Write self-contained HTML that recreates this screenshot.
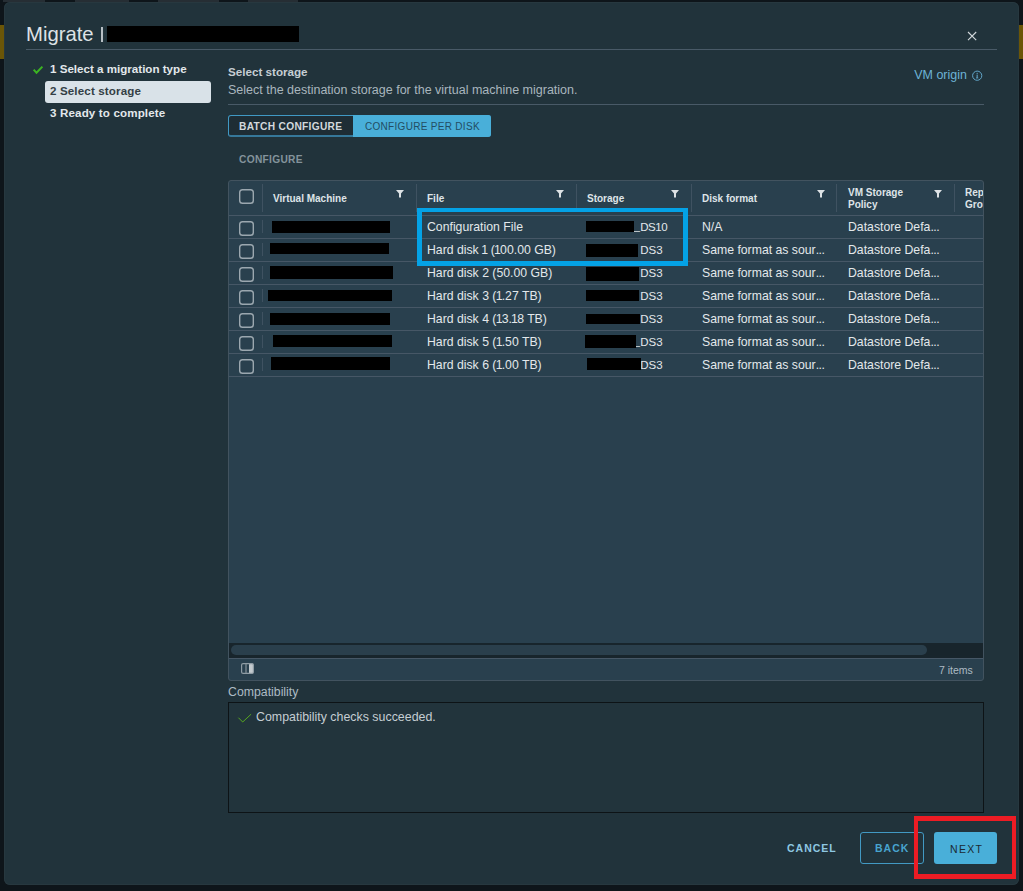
<!DOCTYPE html>
<html><head><meta charset="utf-8">
<style>
*{box-sizing:border-box;margin:0;padding:0}
html,body{width:1023px;height:891px;overflow:hidden;background:#0e151a;font-family:"Liberation Sans",sans-serif}
.abs{position:absolute}
.t{position:absolute;white-space:nowrap;line-height:1}
#modal{position:absolute;left:4px;top:2px;width:1015px;height:883px;background:#21333b;border-radius:6px;box-shadow:inset 0 0 0 1px #27383f}
.hl{position:absolute;height:1px;background:#495a67}
.blk{position:absolute;background:#000}
.cb{position:absolute;width:15px;height:15px;border-radius:3.5px;box-shadow:inset 0 0 0 1.4px #9ba7af}
.cell{position:absolute;font-size:12.25px;color:#e3e8eb;white-space:nowrap;line-height:1}
.rowl{position:absolute;left:229px;width:754px;height:1px;background:#465766}
.vsep{position:absolute;width:1px;background:#3f5261}
.hdr{position:absolute;font-size:10px;font-weight:bold;color:#dfe4e8;white-space:nowrap;line-height:12px}
.flt{position:absolute;width:8px;height:8px}
</style></head><body>
<!-- background stuff -->
<div class="abs" style="left:0;top:25px;width:5px;height:34px;background:#6b5607"></div>
<div class="abs" style="left:1019px;top:25px;width:4px;height:34px;background:#6b5607"></div>

<div class="abs" style="left:3px;top:0;width:42px;height:2px;background:#262e34"></div>
<div class="abs" style="left:75px;top:0;width:54px;height:2px;background:#262e34"></div>
<div class="abs" style="left:158px;top:0;width:61px;height:2px;background:#262e34"></div>
<div class="abs" style="left:248px;top:0;width:50px;height:2px;background:#262e34"></div>
<div id="modal"></div>

<!-- title -->
<div class="t" style="left:26px;top:24.3px;font-size:20.3px;color:#dde2e6">Migrate</div>
<div class="abs" style="left:101px;top:26.5px;width:2px;height:15px;background:#b8c0c5"></div>
<div class="blk" style="left:107px;top:26px;width:192px;height:16px"></div>
<div class="hl" style="left:26px;top:49px;width:971px"></div>
<!-- close -->
<svg class="abs" style="left:966px;top:30px" width="12" height="12" viewBox="0 0 12 12"><path d="M2 2L10.2 10.2M10.2 2L2 10.2" stroke="#d3d9dc" stroke-width="1.1"/></svg>

<!-- left nav -->
<svg class="abs" style="left:32px;top:64px" width="12" height="11" viewBox="0 0 12 11"><path d="M1.7 5.6L4.5 8.8L10.4 2.6" stroke="#3cb422" stroke-width="2" fill="none"/></svg>
<div class="t" style="left:50px;top:63.4px;font-size:11.6px;font-weight:bold;color:#e3e8eb">1 Select a migration type</div>
<div class="abs" style="left:45px;top:81px;width:166px;height:22px;background:#d9e2e8;border-radius:3px"></div>
<div class="t" style="left:50px;top:84.6px;font-size:11.6px;font-weight:bold;color:#343f46;letter-spacing:0.13px">2 Select storage</div>
<div class="t" style="left:50px;top:107px;font-size:11.6px;font-weight:bold;color:#e3e8eb;letter-spacing:0.14px">3 Ready to complete</div>

<!-- content header -->
<div class="t" style="left:228px;top:65.5px;font-size:11.65px;font-weight:bold;color:#c6ced3">Select storage</div>
<div class="t" style="left:228px;top:84px;font-size:12.5px;color:#a9b6be">Select the destination storage for the virtual machine migration.</div>
<div class="t" style="left:914.3px;top:68.5px;font-size:12.45px;color:#6db4d6">VM origin</div>
<svg class="abs" style="left:971px;top:70px" width="12" height="12" viewBox="0 0 12 12"><circle cx="6.2" cy="5.7" r="4.6" stroke="#62a6c9" stroke-width="1" fill="none"/><rect x="5.6" y="4.6" width="1.1" height="3.4" fill="#62a6c9"/><circle cx="6.15" cy="3.3" r="0.65" fill="#62a6c9"/><rect x="5" y="7.6" width="2.3" height="0.8" fill="#62a6c9"/></svg>
<div class="hl" style="left:228px;top:104px;width:756px"></div>

<!-- button group -->
<div class="abs" style="left:228px;top:115px;width:263px;height:22px;border:1px solid #4099c4;border-bottom:2px solid #36789a;border-radius:3px;background:#1e2d35"></div>
<div class="abs" style="left:353px;top:115px;width:138px;height:22px;background:#49afd9;border-radius:0 3px 3px 0"></div>
<div class="t" style="left:239px;top:122px;font-size:10.2px;font-weight:bold;color:#d3d9dd;letter-spacing:0.3px">BATCH CONFIGURE</div>
<div class="t" style="left:365px;top:122px;font-size:10px;color:#234d63;letter-spacing:0.3px">CONFIGURE PER DISK</div>
<div class="t" style="left:239px;top:155px;font-size:10.2px;font-weight:bold;color:#84939c;letter-spacing:0.3px">CONFIGURE</div>

<!-- datagrid -->
<div class="abs" style="left:228px;top:180px;width:756px;height:501px;background:#29404e;border:1px solid #42535f;border-radius:3px"></div>
<div class="hl" style="left:229px;top:215px;width:754px;background:#465766"></div>
<div id="rows"></div><div class="cb" style="left:239px;top:189px"></div>
<div class="vsep" style="left:262px;top:184px;height:28px"></div>
<div class="vsep" style="left:416px;top:184px;height:28px"></div>
<div class="vsep" style="left:576px;top:184px;height:28px"></div>
<div class="vsep" style="left:691px;top:184px;height:28px"></div>
<div class="vsep" style="left:836px;top:184px;height:28px"></div>
<div class="vsep" style="left:954px;top:184px;height:28px"></div>
<div class="hdr" style="left:273px;top:193px">Virtual Machine</div>
<div class="hdr" style="left:427px;top:193px">File</div>
<div class="hdr" style="left:587px;top:193px">Storage</div>
<div class="hdr" style="left:702px;top:193px">Disk format</div>
<div class="hdr" style="left:848px;top:187px">VM Storage<br>Policy</div>
<div class="hdr" style="left:965px;top:187px;width:18px;overflow:hidden">Replication<br>Group</div>
<svg class="flt" style="left:395.5px;top:190px" viewBox="0 0 8 8"><path d="M0 0H8L5 3.5V7.5H3V3.5Z" fill="#dde2e5"/></svg>
<svg class="flt" style="left:555.5px;top:190px" viewBox="0 0 8 8"><path d="M0 0H8L5 3.5V7.5H3V3.5Z" fill="#dde2e5"/></svg>
<svg class="flt" style="left:670.5px;top:190px" viewBox="0 0 8 8"><path d="M0 0H8L5 3.5V7.5H3V3.5Z" fill="#dde2e5"/></svg>
<svg class="flt" style="left:816.5px;top:190px" viewBox="0 0 8 8"><path d="M0 0H8L5 3.5V7.5H3V3.5Z" fill="#dde2e5"/></svg>
<svg class="flt" style="left:933.5px;top:190px" viewBox="0 0 8 8"><path d="M0 0H8L5 3.5V7.5H3V3.5Z" fill="#dde2e5"/></svg>
<div class="rowl" style="top:238px"></div>
<div class="cb" style="left:239px;top:220.6px"></div>
<div class="vsep" style="left:262px;top:220px;height:13px"></div>
<div class="blk" style="left:272px;top:221px;width:118px;height:12px"></div>
<div class="cell" style="left:427px;top:221.3px">Configuration File</div>
<div class="cell" style="left:633.6px;top:221.3px;font-size:11.5px">_</div>
<div class="cell" style="left:640.3px;top:221.8px;font-size:11.5px;letter-spacing:-0.5px">DS10</div>
<div class="blk" style="left:585.6px;top:221px;width:48.39999999999998px;height:11px"></div>
<div class="cell" style="left:702px;top:221.3px">N/A</div>
<div class="cell" style="left:848px;top:221.3px">Datastore Defa<span style="letter-spacing:-0.5px">...</span></div>
<div class="rowl" style="top:261px"></div>
<div class="cb" style="left:239px;top:243.6px"></div>
<div class="vsep" style="left:262px;top:243px;height:13px"></div>
<div class="blk" style="left:270px;top:242.5px;width:119px;height:11.5px"></div>
<div class="cell" style="left:427px;top:244.3px">Hard disk <span style="margin:0 -0.8px">1</span> (<span style="margin:0 -0.8px">1</span>00.00 GB)</div>
<div class="cell" style="left:640.3px;top:244.8px;font-size:11.5px">DS3</div>
<div class="blk" style="left:586.4px;top:244px;width:52.0px;height:12.800000000000011px"></div>
<div class="cell" style="left:702px;top:244.3px">Same format as sour<span style="letter-spacing:-0.5px">...</span></div>
<div class="cell" style="left:848px;top:244.3px">Datastore Defa<span style="letter-spacing:-0.5px">...</span></div>
<div class="rowl" style="top:284px"></div>
<div class="cb" style="left:239px;top:266.6px"></div>
<div class="vsep" style="left:262px;top:266px;height:13px"></div>
<div class="blk" style="left:270.4px;top:266px;width:123.10000000000002px;height:13px"></div>
<div class="cell" style="left:427px;top:267.3px">Hard disk 2 (50.00 GB)</div>
<div class="cell" style="left:640.3px;top:267.8px;font-size:11.5px">DS3</div>
<div class="blk" style="left:586.2px;top:266.7px;width:52.89999999999998px;height:13.900000000000034px"></div>
<div class="cell" style="left:702px;top:267.3px">Same format as sour<span style="letter-spacing:-0.5px">...</span></div>
<div class="cell" style="left:848px;top:267.3px">Datastore Defa<span style="letter-spacing:-0.5px">...</span></div>
<div class="rowl" style="top:307px"></div>
<div class="cb" style="left:239px;top:289.6px"></div>
<div class="vsep" style="left:262px;top:289px;height:13px"></div>
<div class="blk" style="left:267.6px;top:289.8px;width:124.19999999999999px;height:11.199999999999989px"></div>
<div class="cell" style="left:427px;top:290.3px">Hard disk 3 (<span style="margin:0 -0.8px">1</span>.27 TB)</div>
<div class="cell" style="left:640.3px;top:290.8px;font-size:11.5px">DS3</div>
<div class="blk" style="left:586.2px;top:289.7px;width:52.89999999999998px;height:11.300000000000011px"></div>
<div class="cell" style="left:702px;top:290.3px">Same format as sour<span style="letter-spacing:-0.5px">...</span></div>
<div class="cell" style="left:848px;top:290.3px">Datastore Defa<span style="letter-spacing:-0.5px">...</span></div>
<div class="rowl" style="top:330px"></div>
<div class="cb" style="left:239px;top:312.6px"></div>
<div class="vsep" style="left:262px;top:312px;height:13px"></div>
<div class="blk" style="left:270.4px;top:312.7px;width:119.40000000000003px;height:12.100000000000023px"></div>
<div class="cell" style="left:427px;top:313.3px">Hard disk 4 (<span style="margin:0 -0.8px">1</span>3.<span style="margin:0 -0.8px">1</span>8 TB)</div>
<div class="cell" style="left:640.3px;top:313.8px;font-size:11.5px">DS3</div>
<div class="blk" style="left:586.2px;top:314.2px;width:54.09999999999991px;height:9.699999999999989px"></div>
<div class="cell" style="left:702px;top:313.3px">Same format as sour<span style="letter-spacing:-0.5px">...</span></div>
<div class="cell" style="left:848px;top:313.3px">Datastore Defa<span style="letter-spacing:-0.5px">...</span></div>
<div class="rowl" style="top:353px"></div>
<div class="cb" style="left:239px;top:335.6px"></div>
<div class="vsep" style="left:262px;top:335px;height:13px"></div>
<div class="blk" style="left:272.9px;top:335.2px;width:118.90000000000003px;height:11.699999999999989px"></div>
<div class="cell" style="left:427px;top:336.3px">Hard disk 5 (<span style="margin:0 -0.8px">1</span>.50 TB)</div>
<div class="cell" style="left:633.6px;top:336.3px;font-size:11.5px">_</div>
<div class="cell" style="left:640.3px;top:336.8px;font-size:11.5px">DS3</div>
<div class="blk" style="left:585.4px;top:334.8px;width:51.10000000000002px;height:12.899999999999977px"></div>
<div class="cell" style="left:702px;top:336.3px">Same format as sour<span style="letter-spacing:-0.5px">...</span></div>
<div class="cell" style="left:848px;top:336.3px">Datastore Defa<span style="letter-spacing:-0.5px">...</span></div>
<div class="rowl" style="top:376px"></div>
<div class="cb" style="left:239px;top:358.6px"></div>
<div class="vsep" style="left:262px;top:358px;height:13px"></div>
<div class="blk" style="left:271px;top:357px;width:118.80000000000001px;height:12.800000000000011px"></div>
<div class="cell" style="left:427px;top:359.3px">Hard disk 6 (<span style="margin:0 -0.8px">1</span>.00 TB)</div>
<div class="cell" style="left:640.3px;top:359.8px;font-size:11.5px">DS3</div>
<div class="blk" style="left:587.1px;top:358px;width:53.799999999999955px;height:11.699999999999989px"></div>
<div class="cell" style="left:702px;top:359.3px">Same format as sour<span style="letter-spacing:-0.5px">...</span></div>
<div class="cell" style="left:848px;top:359.3px">Datastore Defa<span style="letter-spacing:-0.5px">...</span></div><!--/rows-->

<!-- scrollbar -->
<div class="abs" style="left:229px;top:643px;width:754px;height:15px;background:#18252c"></div>
<div class="abs" style="left:231px;top:645px;width:696px;height:10px;background:#2a3f4c;border-radius:5px"></div>
<div class="hl" style="left:229px;top:658px;width:754px;background:#465766"></div>
<svg class="abs" style="left:241px;top:663px" width="13" height="11" viewBox="0 0 13 11"><rect x="8" y="0.5" width="4.3" height="10" rx="1" fill="#c3cace"/><rect x="0.6" y="0.6" width="11.8" height="9.8" rx="1.5" fill="none" stroke="#8f9ca4" stroke-width="1.2"/><rect x="4.3" y="1" width="1.4" height="9" fill="#7a8890"/></svg>
<div class="t" style="left:939px;top:664.5px;font-size:10.5px;color:#adbbc4">7 items</div>

<!-- compatibility -->
<div class="t" style="left:228px;top:685.5px;font-size:12.3px;color:#adbbc4">Compatibility</div>
<div class="abs" style="left:228px;top:702px;width:756px;height:111px;border:1px solid #0d1316;background:#22343c"></div>
<svg class="abs" style="left:237px;top:712px" width="15" height="12" viewBox="0 0 15 12"><path d="M1.4 5.7L5.7 10L14.1 2.2" stroke="#56a820" stroke-width="1" fill="none"/></svg>
<div class="t" style="left:256px;top:711px;font-size:12.4px;color:#c5ced3">Compatibility checks succeeded.</div>

<!-- footer buttons -->
<div class="t" style="left:787px;top:843.4px;font-size:10.5px;font-weight:bold;color:#8ec8e2;letter-spacing:1px">CANCEL</div>
<div class="abs" style="left:860px;top:832px;width:64px;height:32px;border:1px solid #4299c3;border-radius:3px"></div>
<div class="t" style="left:875px;top:843.3px;font-size:10.5px;font-weight:bold;color:#48a4cf;letter-spacing:1px">BACK</div>
<div class="abs" style="left:934px;top:832px;width:63px;height:32px;background:#49afd9;border-radius:3px"></div>
<div class="t" style="left:950px;top:843.5px;font-size:10.5px;color:#1b2a32;letter-spacing:1.3px">NEXT</div>

<!-- annotations -->
<div class="abs" style="left:417px;top:208px;width:271px;height:58px;border:5px solid #04a2e6;border-top-width:4px"></div>
<div class="abs" style="left:914px;top:816px;width:102px;height:63px;border:5px solid #ed1c24;border-left-width:4px;border-right-width:4px"></div>
</body></html>
